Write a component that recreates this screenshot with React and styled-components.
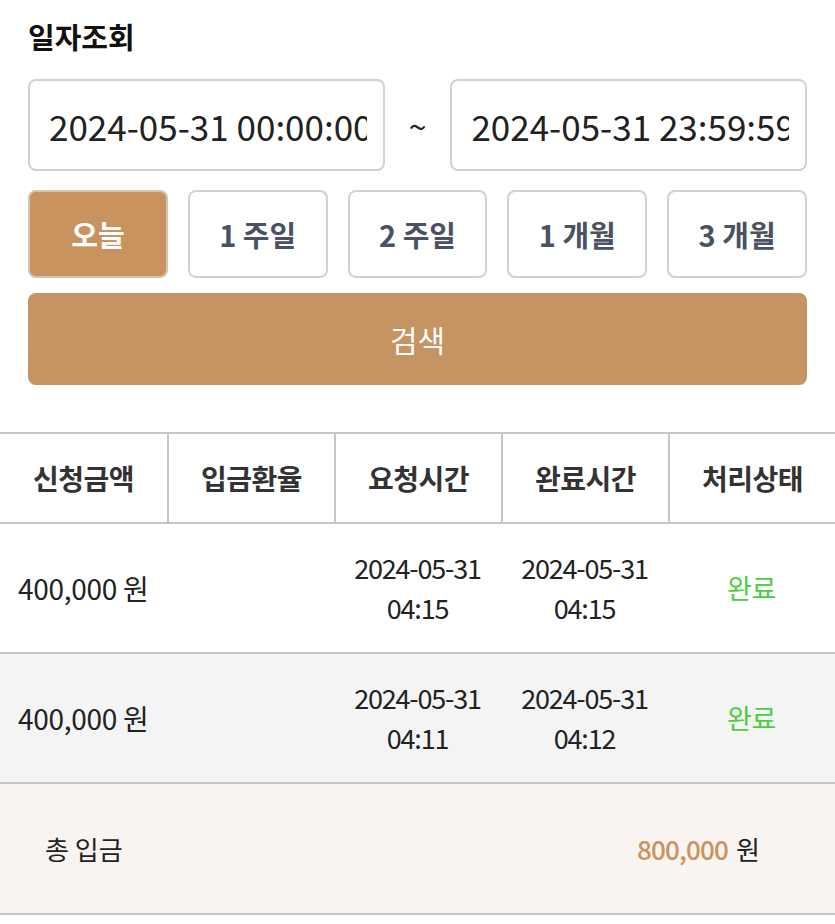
import React from 'react';
import styled, { createGlobalStyle } from 'styled-components';

const GlobalStyle = createGlobalStyle`
  body {
    margin: 0;
    background: #fff;
    font-family: "Noto Sans CJK KR", "Noto Sans", sans-serif;
    color: #222;
  }
`;

const Page = styled.div`
  width: 835px;
`;

const Filter = styled.section`
  padding: 12px 28px 0 28px;
`;

const Title = styled.h2`
  margin: 0 0 19px 0;
  font-size: 29px;
  font-weight: 700;
  color: #111;
  line-height: 48px;
`;

const DateRow = styled.div`
  display: flex;
  align-items: center;
  gap: 24px;
`;

const DateInput = styled.input`
  flex: 1;
  min-width: 0;
  height: 92px;
  box-sizing: border-box;
  border: 2px solid #d2d2d2;
  border-radius: 8px;
  padding: 0 16px 0 19px;
  font-family: "Noto Sans CJK KR", "Noto Sans", sans-serif;
  font-size: 35px;
  color: #222;
  background: #fff;
  outline: none;
`;

const Tilde = styled.span`
  font-size: 32px;
  color: #222;
`;

const RangeRow = styled.div`
  display: grid;
  grid-template-columns: repeat(5, 1fr);
  gap: 20px;
  margin-top: 19px;
`;

const RangeButton = styled.button`
  height: 88px;
  border: 2px solid ${p => (p.$active ? '#d3c3b3' : '#d2d2d2')};
  border-radius: 8px;
  background: ${p => (p.$active ? '#c8935f' : '#fff')};
  color: ${p => (p.$active ? '#fff' : '#4a5163')};
  font-family: "Noto Sans CJK KR", "Noto Sans", sans-serif;
  font-size: 29px;
  font-weight: 700;
`;

const SearchButton = styled.button`
  display: block;
  width: 100%;
  height: 92px;
  margin-top: 15px;
  border: none;
  border-radius: 8px;
  background: #c69362;
  color: #fff;
  font-family: "Noto Sans CJK KR", "Noto Sans", sans-serif;
  font-size: 30px;
  font-weight: 400;
`;

const Table = styled.div`
  margin-top: 47px;
  border-top: 2px solid #cbc4c4;
`;

const Row = styled.div`
  display: grid;
  grid-template-columns: repeat(5, 1fr);
  height: ${p => p.$height}px;
  border-bottom: 2px solid #cbc4c4;
  background: ${p => p.$bg || '#fff'};
`;

const HeadCell = styled.div`
  display: flex;
  align-items: center;
  justify-content: center;
  font-size: 28px;
  font-weight: 700;
  color: #333;
  letter-spacing: -0.5px;
  & + & {
    border-left: 2px solid #cbc4c4;
  }
`;

const Cell = styled.div`
  display: flex;
  flex-direction: column;
  align-items: ${p => (p.$left ? 'flex-start' : 'center')};
  justify-content: center;
  padding-left: ${p => (p.$left ? '18px' : '0')};
  font-size: ${p => (p.$left ? '28px' : '27px')};
  line-height: 40px;
  color: ${p => p.$color || '#222'};
  letter-spacing: ${p => (p.$tight ? '-1.2px' : '-0.3px')};
`;

const TotalRow = styled.div`
  display: flex;
  align-items: center;
  justify-content: space-between;
  height: 129px;
  padding: 0 75px 0 45px;
  background: #f9f4f0;
  border-bottom: 2px solid #cbc4c4;
  font-size: 26px;
  color: #222;
`;

const Amount = styled.span`
  color: #c8935f;
  font-weight: 500;
  letter-spacing: -0.8px;
  margin-right: 8px;
`;

const ranges = ['오늘', '1 주일', '2 주일', '1 개월', '3 개월'];
const heads = ['신청금액', '입금환율', '요청시간', '완료시간', '처리상태'];
const rows = [
  { amount: '400,000 원', req: '04:15', done: '04:15' },
  { amount: '400,000 원', req: '04:11', done: '04:12' },
];

export default function App() {
  return (
    <Page>
      <GlobalStyle />
      <Filter>
        <Title>일자조회</Title>
        <DateRow>
          <DateInput readOnly value="2024-05-31 00:00:00" />
          <Tilde>~</Tilde>
          <DateInput readOnly value="2024-05-31 23:59:59" />
        </DateRow>
        <RangeRow>
          {ranges.map((r, i) => (
            <RangeButton key={r} $active={i === 0}>{r}</RangeButton>
          ))}
        </RangeRow>
        <SearchButton>검색</SearchButton>
      </Filter>
      <Table>
        <Row $height={88}>
          {heads.map(h => <HeadCell key={h}>{h}</HeadCell>)}
        </Row>
        {rows.map((r, i) => (
          <Row key={i} $height={128} $bg={i % 2 ? '#f4f4f4' : '#fff'}>
            <Cell $left>{r.amount}</Cell>
            <Cell />
            <Cell $tight><span>2024-05-31</span><span>{r.req}</span></Cell>
            <Cell $tight><span>2024-05-31</span><span>{r.done}</span></Cell>
            <Cell $color="#4ccd3f">완료</Cell>
          </Row>
        ))}
        <TotalRow>
          <span>총 입금</span>
          <span><Amount>800,000</Amount>원</span>
        </TotalRow>
      </Table>
    </Page>
  );
}
